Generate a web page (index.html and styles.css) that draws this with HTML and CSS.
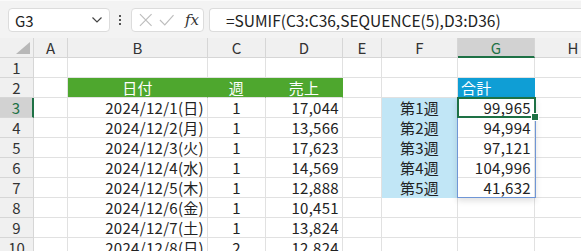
FILE: index.html
```html
<!DOCTYPE html>
<html lang="ja">
<head>
<meta charset="UTF-8" />
<title>SUMIF SEQUENCE</title>
<link rel="stylesheet" href="styles.css">
</head>
<body>
  <div class="toolbar">
    <div class="namebox">
      <span>G3</span>
      <svg width="12" height="8" viewBox="0 0 12 8"><path d="M1.5 1.5 L6 6 L10.5 1.5" fill="none" stroke="#444" stroke-width="1.2"/></svg>
    </div>
    <div class="dots"><i></i><i></i><i></i></div>
    <div class="fxbox">
      <svg width="16" height="16" viewBox="0 0 16 16"><path d="M2 2 L14 14 M14 2 L2 14" stroke="#bdbdbd" stroke-width="1.2"/></svg>
      <svg width="18" height="16" viewBox="0 0 18 16"><path d="M2 8 L7 13 L16 3" fill="none" stroke="#bdbdbd" stroke-width="1.2"/></svg>
      <span class="fx">fx</span>
    </div>
    <div class="formula">=SUMIF(C3:C36,SEQUENCE(5),D3:D36)</div>
  </div>

  <div class="sheet">
    <div class="corner"><span class="tri"></span></div>
    <div class="colhead">A</div>
    <div class="colhead">B</div>
    <div class="colhead">C</div>
    <div class="colhead">D</div>
    <div class="colhead">E</div>
    <div class="colhead">F</div>
    <div class="colhead sel">G</div>
    <div class="colhead">H</div>

    <div class="rowhead">1</div>
    <div class="cell"></div><div class="cell"></div><div class="cell"></div><div class="cell"></div>
    <div class="cell"></div><div class="cell"></div><div class="cell"></div><div class="cell"></div>

    <div class="rowhead">2</div>
    <div class="cell"></div>
    <div class="cell hd center">日付</div>
    <div class="cell hd center">週</div>
    <div class="cell hd center">売上</div>
    <div class="cell"></div><div class="cell"></div>
    <div class="cell hd-blue">合計</div>
    <div class="cell"></div>

    <div class="rowhead sel">3</div>
    <div class="cell"></div>
    <div class="cell right">2024/12/1(日)</div>
    <div class="cell center">1</div>
    <div class="cell right">17,044</div>
    <div class="cell"></div>
    <div class="cell wk center">第1週</div>
    <div class="cell right total">99,965</div>
    <div class="cell"></div>

    <div class="rowhead">4</div>
    <div class="cell"></div>
    <div class="cell right">2024/12/2(月)</div>
    <div class="cell center">1</div>
    <div class="cell right">13,566</div>
    <div class="cell"></div>
    <div class="cell wk center">第2週</div>
    <div class="cell right total">94,994</div>
    <div class="cell"></div>

    <div class="rowhead">5</div>
    <div class="cell"></div>
    <div class="cell right">2024/12/3(火)</div>
    <div class="cell center">1</div>
    <div class="cell right">17,623</div>
    <div class="cell"></div>
    <div class="cell wk center">第3週</div>
    <div class="cell right total">97,121</div>
    <div class="cell"></div>

    <div class="rowhead">6</div>
    <div class="cell"></div>
    <div class="cell right">2024/12/4(水)</div>
    <div class="cell center">1</div>
    <div class="cell right">14,569</div>
    <div class="cell"></div>
    <div class="cell wk center">第4週</div>
    <div class="cell right total">104,996</div>
    <div class="cell"></div>

    <div class="rowhead">7</div>
    <div class="cell"></div>
    <div class="cell right">2024/12/5(木)</div>
    <div class="cell center">1</div>
    <div class="cell right">12,888</div>
    <div class="cell"></div>
    <div class="cell wk center">第5週</div>
    <div class="cell right total">41,632</div>
    <div class="cell"></div>

    <div class="rowhead">8</div>
    <div class="cell"></div>
    <div class="cell right">2024/12/6(金)</div>
    <div class="cell center">1</div>
    <div class="cell right">10,451</div>
    <div class="cell"></div><div class="cell"></div><div class="cell"></div><div class="cell"></div>

    <div class="rowhead">9</div>
    <div class="cell"></div>
    <div class="cell right">2024/12/7(土)</div>
    <div class="cell center">1</div>
    <div class="cell right">13,824</div>
    <div class="cell"></div><div class="cell"></div><div class="cell"></div><div class="cell"></div>

    <div class="rowhead">10</div>
    <div class="cell"></div>
    <div class="cell right">2024/12/8(日)</div>
    <div class="cell center">2</div>
    <div class="cell right">12,824</div>
    <div class="cell"></div><div class="cell"></div><div class="cell"></div><div class="cell"></div>

    <div class="spill"></div>
    <div class="active"><span class="handle"></span></div>
  </div>
</body>
</html>
```

FILE: styles.css
```css
html, body {
  margin: 0;
  padding: 0;
  overflow: hidden;
  background: #f3f3f3;
  font-family: "Noto Sans CJK JP", "Noto Sans", sans-serif;
  color: #222;
}

.toolbar {
  height: 38px;
  display: flex;
  align-items: flex-start;
  padding: 7px 0 0 8px;
  box-sizing: border-box;
  border-top: 1px solid #fafafa;
}

.namebox,
.fxbox,
.formula {
  height: 24px;
  background: #fff;
  border: 1px solid #dcdcdc;
  border-radius: 4px;
  box-sizing: border-box;
  display: flex;
  align-items: center;
}

.namebox {
  width: 102px;
  padding: 0 6px;
  justify-content: space-between;
  font-size: 15px;
}

.dots {
  width: 20px;
  height: 24px;
  display: flex;
  flex-direction: column;
  align-items: center;
  justify-content: center;
  gap: 2px;
}

.dots i {
  width: 2px;
  height: 2px;
  background: #555;
}

.fxbox {
  width: 73px;
  margin-left: 1px;
  padding: 0 4px 0 6px;
  gap: 4px;
}

.fx {
  font-family: "DejaVu Serif", "Liberation Serif", serif;
  font-style: italic;
  font-size: 15px;
  color: #333;
  margin-left: 6px;
}

.formula {
  flex: 1;
  margin-left: 5px;
  padding-left: 16px;
  font-size: 15.5px;
  color: #222;
  border-right: none;
  border-radius: 4px 0 0 4px;
}

.sheet {
  position: relative;
  display: grid;
  grid-template-columns: 34px 34px 140px 58px 77px 39px 76px 77px 77px;
  grid-template-rows: repeat(11, 20px);
  background: #fff;
  font-size: 15px;
}

.corner,
.colhead,
.rowhead {
  background: #f0f0f0;
  color: #333;
  display: flex;
  align-items: center;
  justify-content: center;
  box-sizing: border-box;
  border-right: 1px solid #d6d6d6;
  border-bottom: 1px solid #d6d6d6;
}

.colhead.sel {
  background: #d2d2d2;
  border-bottom: 2px solid #1e7145;
  color: #1e7145;
}

.rowhead.sel {
  background: #d2d2d2;
  border-right: 2px solid #1e7145;
  color: #1e7145;
}

.corner {
  position: relative;
}

.tri {
  position: absolute;
  right: 3px;
  bottom: 3px;
  width: 0;
  height: 0;
  border-left: 14px solid transparent;
  border-bottom: 12px solid #b8b8b8;
}

.cell {
  box-sizing: border-box;
  border-right: 1px solid #e1e1e1;
  border-bottom: 1px solid #e1e1e1;
  display: flex;
  align-items: center;
  padding: 0 3px;
  white-space: nowrap;
  line-height: 1;
  letter-spacing: 0.3px;
}

.right { justify-content: flex-end; }
.center { justify-content: center; }

.hd {
  background: #4ea72e;
  color: #fff;
  border-right-color: #4ea72e;
}

.hd-blue {
  background: #0f9ed5;
  color: #fff;
  border-right-color: #0f9ed5;
}

.wk {
  background: #c1e6f6;
  border-right-color: #c1e6f6;
  border-bottom-color: #c1e6f6;
}

/* selection overlays on top of G3:G7 */
.spill {
  position: absolute;
  left: 457px;
  top: 59px;
  width: 79px;
  height: 101px;
  box-sizing: border-box;
  border: 1px solid #6f96d6;
  box-shadow: 0 3px 6px rgba(0, 0, 0, 0.12);
  pointer-events: none;
}

.active {
  position: absolute;
  left: 457px;
  top: 59px;
  width: 79px;
  height: 21px;
  box-sizing: border-box;
  border: 2px solid #1e7145;
}

.handle {
  position: absolute;
  right: -5px;
  bottom: -5px;
  width: 6px;
  height: 6px;
  background: #1e7145;
  border: 1px solid #fff;
}
```
